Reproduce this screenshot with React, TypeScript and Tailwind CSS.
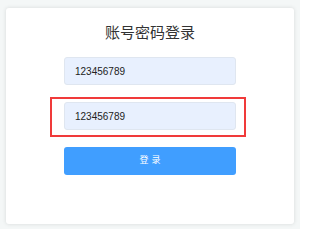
import React from "react";

export default function App() {
  return (
    <div
      className="w-[300px] h-[229px] bg-[#f4f7f7] pt-[8px] pl-[6px] pr-[6px]"
      style={{ fontFamily: '"Liberation Sans", "Noto Sans CJK SC", sans-serif' }}
    >
      <div className="w-[288px] h-[216px] bg-white rounded-[3px] shadow-[0_0_4px_rgba(0,0,0,0.12)] flex flex-col items-center pt-[15px]">
        <div className="h-[20px] leading-[20px] text-[15px] text-[#333333]">账号密码登录</div>
        <div className="mt-[14px] w-[172px] h-[28px] rounded-[3px] bg-[#e8f0fe] border border-[#dfe6f0] flex items-center pl-[10px] text-[10px] text-[#222222]">
          123456789
        </div>
        <div className="mt-[12px] mr-[4px] border-2 border-[#f03a3a] pl-[12px] pr-[8px] pt-[3px] pb-[5px]">
          <div className="w-[172px] h-[28px] rounded-[3px] bg-[#e8f0fe] border border-[#dfe6f0] flex items-center pl-[10px] text-[10px] text-[#222222]">
            123456789
          </div>
        </div>
        <div className="mt-[10px] w-[172px] h-[28px] rounded-[3px] bg-[#409eff] flex items-center justify-center text-[9px] tracking-[3px] text-white pl-[3px]">
          登录
        </div>
      </div>
    </div>
  );
}
